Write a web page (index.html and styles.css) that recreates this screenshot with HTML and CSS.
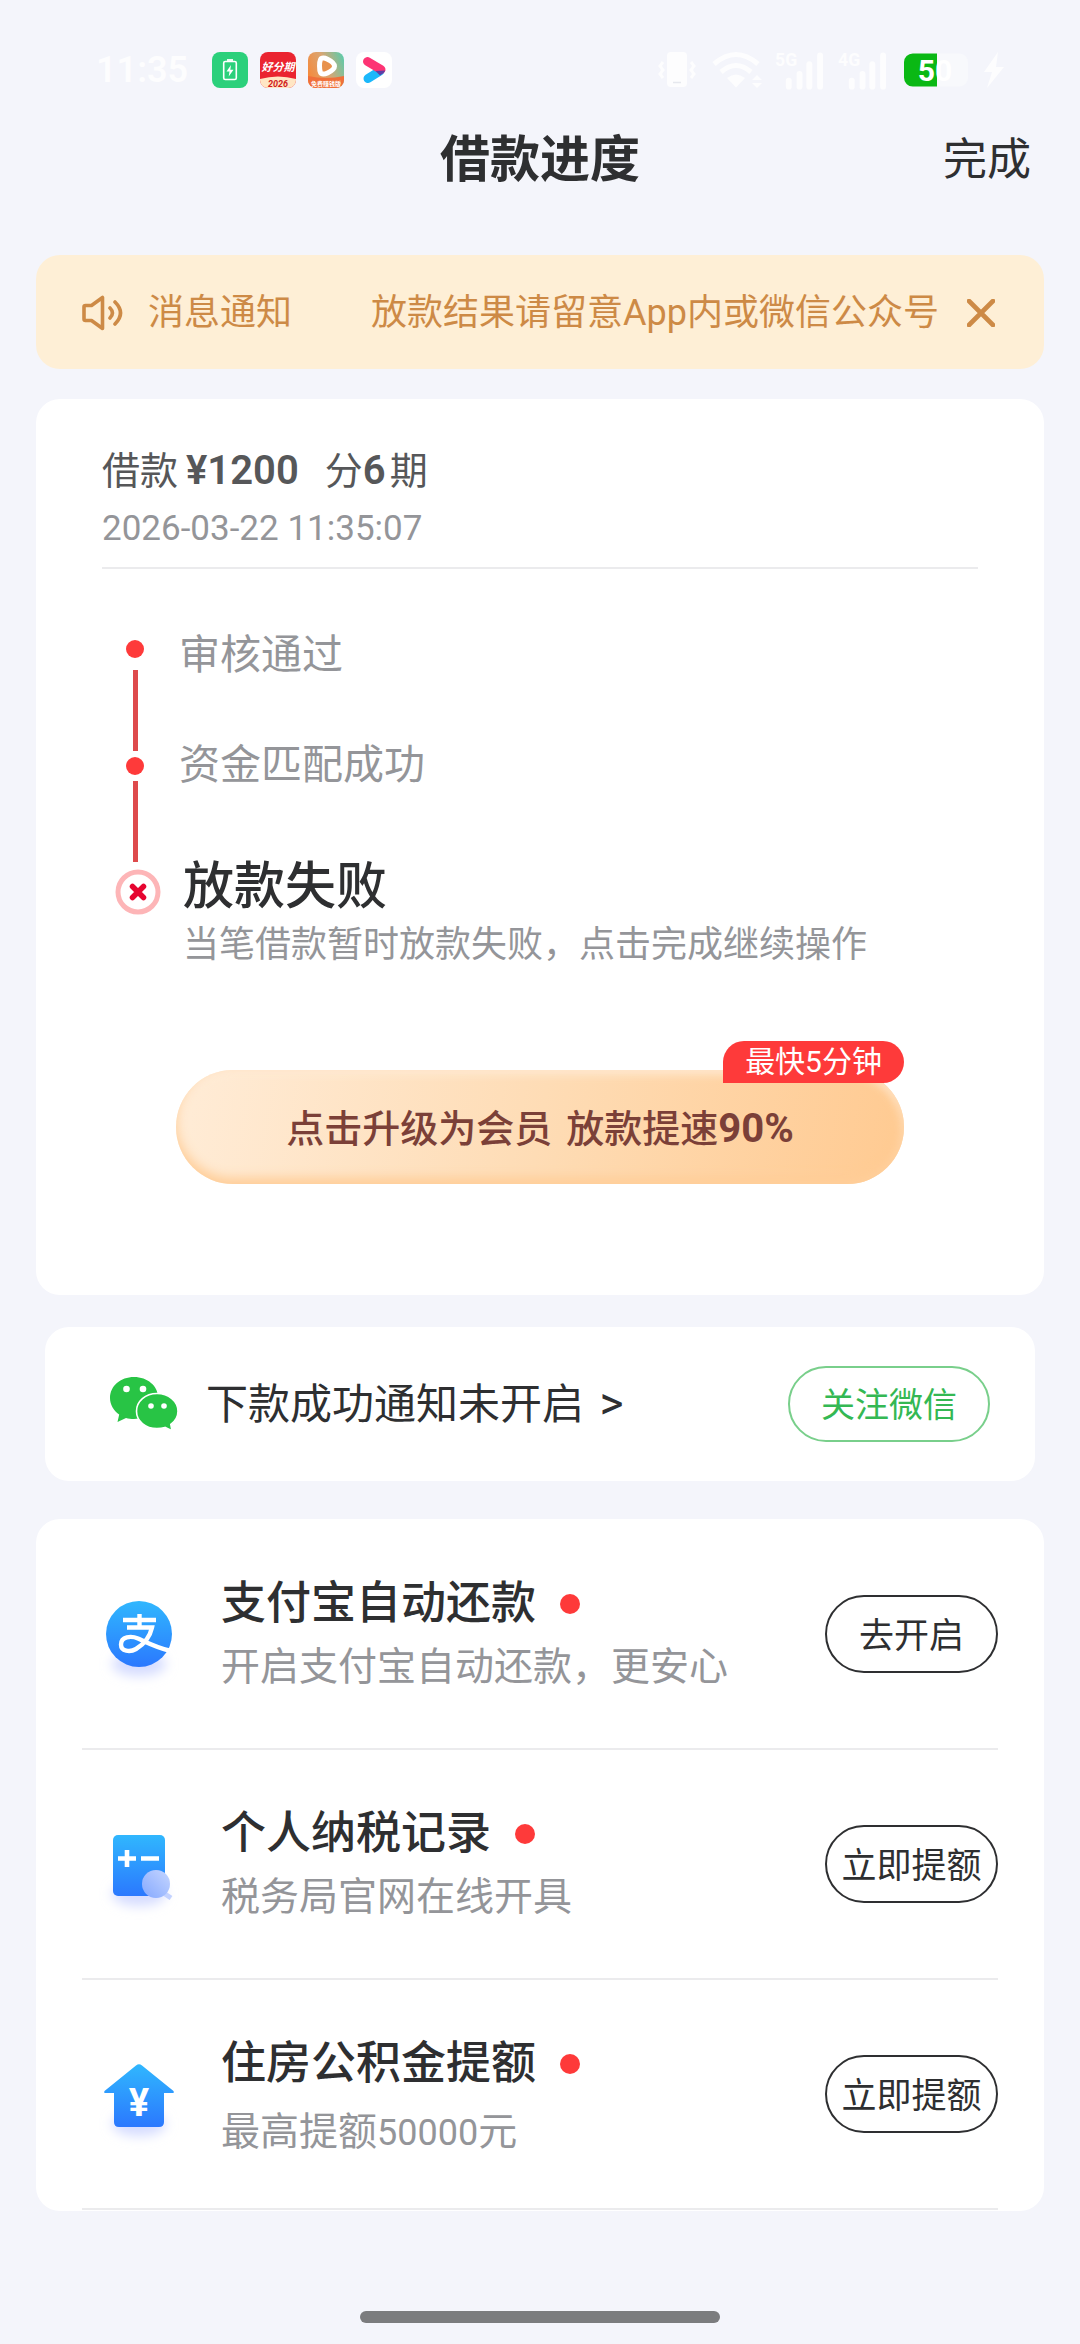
FILE: index.html
```html
<!DOCTYPE html>
<html lang="zh-CN">
<head>
<meta charset="UTF-8">
<meta name="viewport" content="width=device-width, initial-scale=1">
<title>借款进度</title>
<link rel="stylesheet" href="styles.css">
</head>
<body>
<div class="status-bar">
  <span class="clock">11:35</span>
  <div class="status-apps">
    <svg class="app" viewBox="0 0 36 36" aria-hidden="true">
      <rect width="36" height="36" rx="8" fill="#2bd07b"/>
      <rect x="11.700" y="9.500" width="12.600" height="18" rx="1.500" fill="none" stroke="#fff" stroke-width="1.600"/>
      <path d="M15 8h6" stroke="#fff" stroke-width="1.800"/>
      <path d="M19 13l-4.500 6.500h3l-.8 5 4.800-6.800h-3.200z" fill="#fff"/>
    </svg>
    <svg class="app" viewBox="0 0 36 36" aria-hidden="true">
      <defs>
        <clipPath id="tile"><rect width="36" height="36" rx="8"/></clipPath>
      </defs>
      <g clip-path="url(#tile)">
        <rect width="36" height="36" fill="#ea2430"/>
        <path d="M0 27q18-5 36 0v9H0z" fill="#ffe6c4"/>
        <text x="18" y="19" text-anchor="middle" class="app-name">好分期</text>
        <text x="18" y="35" text-anchor="middle" class="app-year">2026</text>
      </g>
    </svg>
    <svg class="app" viewBox="0 0 36 36" aria-hidden="true">
      <defs>
        <linearGradient id="play" x1="0" y1=".6" x2="1" y2=".2">
          <stop offset="0" stop-color="#f58a3c"/><stop offset=".5" stop-color="#d9a673"/><stop offset="1" stop-color="#62c9a8"/>
        </linearGradient>
      </defs>
      <g clip-path="url(#tile)">
        <rect width="36" height="36" fill="url(#play)"/>
        <path d="M0 24q18 4 36 0v12H0z" fill="#f0703a"/>
        <path d="M12.500 7.500c1-2 4-1.800 7-.3 3.500 1.700 7 4.500 7 7s-3.500 5-7 6.700c-3 1.500-6 1.800-7-.2-1.300-2.700-1.300-10.500 0-13.200z" fill="#e8924c" stroke="#fff" stroke-width="5"/>
        <text x="18" y="34" text-anchor="middle" class="app-tag">免费赚钱版</text>
      </g>
    </svg>
    <svg class="app" viewBox="0 0 36 36" aria-hidden="true">
      <rect width="36" height="36" rx="8" fill="#fff"/>
      <path d="M12 26.500L24 19" stroke="#1bb8fb" stroke-width="9" stroke-linecap="round"/>
      <path d="M11.500 9.500L25 17.500" stroke="#fd3474" stroke-width="9" stroke-linecap="round"/>
      <path d="M19.500 19l9.800-.6q-1 2.500-5.300 5z" fill="#5b3fa8"/>
    </svg>
  </div>
  <div class="status-system">
    <svg class="sys-vibrate" viewBox="0 0 38 36" aria-hidden="true">
      <rect x="9" width="20" height="35" rx="4" fill="#fdfdfe"/>
      <path d="M15 30.500h8" stroke="#e6e8ee" stroke-width="1.500"/>
      <path d="M5 10l-3 4 3 4-3 4 3 4M33 10l3 4-3 4 3 4-3 4" fill="none" stroke="#fdfdfe" stroke-width="3"/>
    </svg>
    <svg class="sys-wifi" viewBox="0 0 50 36" aria-hidden="true">
      <path d="M2 12q22-19 44 0M9 20q15-13 30 0" fill="none" stroke="#fdfdfe" stroke-width="5"/>
      <path d="M15 26q9-7 18 0l-9 9.500z" fill="#fdfdfe"/>
      <path d="M40 28l5-5 5 5zM40 31l5 5 5-5z" fill="#fdfdfe"/>
    </svg>
    <svg class="sys-signal" viewBox="0 0 48 36" aria-hidden="true">
      <text x="-3" y="14" class="net">5G</text>
      <path d="M11 29v6M22 22v13M32 12v23M43 3v32" stroke="#fdfdfe" stroke-width="6" stroke-linecap="round"/>
    </svg>
    <svg class="sys-signal" viewBox="0 0 48 36" aria-hidden="true">
      <text x="-3" y="14" class="net">4G</text>
      <path d="M11 29v6M22 22v13M32 12v23M43 3v32" stroke="#fdfdfe" stroke-width="6" stroke-linecap="round"/>
    </svg>
    <svg class="sys-battery" viewBox="0 0 66 34" aria-hidden="true">
      <rect width="66" height="34" rx="9" fill="#f8f9fc"/>
      <path d="M34 0H9a9 9 0 0 0-9 9v16a9 9 0 0 0 9 9h25z" fill="#0ab814"/>
      <text x="32" y="28" text-anchor="middle" class="level">50</text>
    </svg>
    <svg class="sys-bolt" viewBox="0 0 20 36" aria-hidden="true">
      <path d="M14 0L0 20h8L3 36l17-21h-8z" fill="#fdfdfe"/>
    </svg>
  </div>
</div>

<header class="nav">
  <h1 class="nav-title">借款进度</h1>
  <button class="nav-done" type="button">完成</button>
</header>

<main class="page">
  <section class="notice">
    <svg class="notice-icon" viewBox="0 0 42 36" aria-hidden="true">
      <path d="M3.500 10.500h6L20.500 2.500v31l-11-8h-6q-1.500 0-1.500-1.500V12q0-1.500 1.500-1.500z" fill="none" stroke="#cd8a46" stroke-width="3.600" stroke-linejoin="round"/>
      <path d="M28 13q5 5 0 10M33 7q11 11 0 22" fill="none" stroke="#cd8a46" stroke-width="3.600" stroke-linecap="round"/>
    </svg>
    <span class="notice-label">消息通知</span>
    <p class="notice-text">放款结果请留意App内或微信公众号</p>
    <button class="notice-close" type="button" aria-label="关闭">
      <svg viewBox="0 0 28 28" aria-hidden="true"><path d="M2 2l24 24M26 2L2 26" stroke="#cd8a46" stroke-width="4.600" stroke-linecap="round"/></svg>
    </button>
  </section>

  <section class="card loan">
    <div class="loan-head">
      <p class="loan-sum"><span>借款</span><b class="loan-amount">¥1200</b><span class="loan-term">分<b>6</b></span><span class="loan-unit">期</span></p>
      <time class="loan-time">2026-03-22 11:35:07</time>
    </div>
    <div class="timeline">
      <div class="rail" aria-hidden="true">
        <i class="rail-dot"></i>
        <i class="rail-line"></i>
        <i class="rail-dot rail-dot-next"></i>
        <i class="rail-line rail-line-next"></i>
        <svg class="rail-fail" viewBox="0 0 46 46">
          <circle cx="23" cy="23" r="20" fill="#fff" stroke="#fdb5b7" stroke-width="5"/>
          <path d="M17.500 17.500l11 11M28.500 17.500l-11 11" stroke="#e60530" stroke-width="5.500" stroke-linecap="round"/>
        </svg>
      </div>
      <ol class="steps">
        <li class="step">审核通过</li>
        <li class="step">资金匹配成功</li>
        <li class="step-fail">
          <h2 class="fail-title">放款失败</h2>
          <p class="fail-text">当笔借款暂时放款失败，点击完成继续操作</p>
        </li>
      </ol>
    </div>
    <button class="upgrade" type="button">
      <span class="upgrade-text"><span>点击升级为会员</span> <span>放款提速<b>90%</b></span></span>
      <span class="upgrade-badge">最快5分钟</span>
    </button>
  </section>

  <section class="card wechat">
    <svg class="wechat-icon" viewBox="0 0 68 54" aria-hidden="true">
      <path d="M24 0c13.500 0 24 9 24 20S37.500 42 24 42c-3 0-5.500-.4-8-1.100L7.500 45l1.700-7.500C3.500 33.800 0 27.500 0 21 0 9 10.500 0 24 0z" fill="#28c445"/>
      <path d="M47 16.500c11.600 0 21 7.700 21 17.700 0 5.500-2.800 10-7.200 13.200l1.200 6.400-7-3.400c-2.500.8-5 1.200-8 1.200-11.600 0-20.500-7.700-20.500-17.400S35.400 16.500 47 16.500z" fill="#28c445" stroke="#fff" stroke-width="1.600"/>
      <circle cx="16.500" cy="12" r="3.300" fill="#fff"/><circle cx="33" cy="12" r="3.300" fill="#fff"/>
      <circle cx="41" cy="29" r="2.800" fill="#fff"/><circle cx="54" cy="29" r="2.800" fill="#fff"/>
    </svg>
    <a class="wechat-link" href="#wechat">下款成功通知未开启 <span class="wechat-more">&gt;</span></a>
    <button class="pill pill-green" type="button">关注微信</button>
  </section>

  <ul class="card offers">
    <li class="offer">
      <svg class="offer-icon" viewBox="0 0 70 84" aria-hidden="true">
        <defs>
          <linearGradient id="blue" x1="0" y1="0" x2="0" y2="1"><stop offset="0" stop-color="#30b7fe"/><stop offset="1" stop-color="#2b78fe"/></linearGradient>
          <filter id="glow" x="-50%" y="-100%" width="200%" height="300%"><feGaussianBlur stdDeviation="6"/></filter>
        </defs>
        <ellipse cx="35" cy="72" rx="27" ry="12" fill="#d5dcff" filter="url(#glow)"/>
        <circle cx="35" cy="42" r="33" fill="url(#blue)"/>
        <path d="M19 28h33M35.500 22v13M23 35.500h25c-2 9-8.500 17-16 21.500-6 3.500-15 2.500-15-4.500 0-8 10-9 17-6 9 4 17 8.500 31 12" fill="none" stroke="#fff" stroke-width="4.400"/>
      </svg>
      <div class="offer-body">
        <h3 class="offer-title">支付宝自动还款</h3>
        <p class="offer-text">开启支付宝自动还款，更安心</p>
      </div>
      <button class="pill" type="button">去开启</button>
    </li>
    <li class="offer">
      <svg class="offer-icon" viewBox="0 0 70 84" aria-hidden="true">
        <defs><linearGradient id="lens" x1="0" y1="1" x2="1" y2="0"><stop offset="0" stop-color="#84a8ff"/><stop offset="1" stop-color="#c6d6ff"/></linearGradient></defs>
        <ellipse cx="35" cy="72" rx="27" ry="12" fill="#d5dcff" filter="url(#glow)"/>
        <rect x="9" y="13" width="52" height="61" rx="5" fill="url(#blue)"/>
        <path d="M14 36.500h18M23 28v17M37 36.500h18" stroke="#fff" stroke-width="4.600"/>
        <path d="M61 72l6 4" stroke="#c3d2ff" stroke-width="5"/>
        <circle cx="52" cy="62" r="14" fill="url(#lens)"/>
      </svg>
      <div class="offer-body">
        <h3 class="offer-title">个人纳税记录</h3>
        <p class="offer-text">税务局官网在线开具</p>
      </div>
      <button class="pill" type="button">立即提额</button>
    </li>
    <li class="offer">
      <svg class="offer-icon" viewBox="0 0 70 84" aria-hidden="true">
        <ellipse cx="35" cy="72" rx="27" ry="12" fill="#d5dcff" filter="url(#glow)"/>
        <path d="M32 13.500q3-2.500 6 0L69.500 39q1 2-1 2H60v29q0 5-5 5H15q-5 0-5-5V41H1.500q-2 0-1-2z" fill="url(#blue)"/>
        <text x="35" y="64" text-anchor="middle" class="yuan">¥</text>
      </svg>
      <div class="offer-body">
        <h3 class="offer-title">住房公积金提额</h3>
        <p class="offer-text offer-text-low">最高提额<span class="offer-number">50000</span>元</p>
      </div>
      <button class="pill" type="button">立即提额</button>
    </li>
  </ul>
</main>
<div class="home-indicator"></div>
</body>
</html>
```
FILE: styles.css
```css
* { box-sizing: border-box; }

body {
  margin: 0;
  min-height: 100vh;
  display: flex;
  flex-direction: column;
  background: #f4f5fb;
  color: #2e2f31;
  font-family: Roboto, "Noto Sans CJK SC", sans-serif;
}

h1, h2, h3, p, ol, ul { margin: 0; padding: 0; font-weight: 400; }
ol, ul { list-style: none; }
svg { display: block; }
button {
  padding: 0;
  border: 0;
  background: none;
  color: inherit;
  font: inherit;
  cursor: pointer;
}

/* Status bar */
.status-bar {
  display: flex;
  align-items: center;
  height: 130px;
  padding: 10px 76px 0 96px;
}
.clock { width: 116px; color: #fdfdfe; font-size: 36px; font-weight: 600; }
.status-apps { display: flex; gap: 12px; flex: 1; }
.app { width: 36px; height: 36px; }
.app-name { fill: #fff; font-size: 11px; font-weight: 700; font-style: italic; }
.app-year { fill: #d01c22; font-size: 9px; font-weight: 700; font-style: italic; }
.app-tag { fill: #fff; font-size: 6px; font-weight: 700; }
.status-system { display: flex; align-items: center; gap: 16px; }
.sys-vibrate { width: 38px; height: 36px; }
.sys-wifi { width: 50px; height: 36px; overflow: visible; }
.sys-signal { width: 47px; height: 36px; overflow: visible; }
.sys-battery { width: 64px; height: 34px; }
.sys-bolt { width: 20px; height: 36px; }
.net { fill: #fdfdfe; font-size: 18px; font-weight: 700; }
.level { fill: #fff; font-size: 31px; font-weight: 700; }

/* Title row */
.nav {
  display: grid;
  grid-template-columns: 1fr auto 1fr;
  align-items: center;
  height: 60px;
  padding: 0 49px;
}
.nav-title { grid-column: 2; font-size: 50px; line-height: 60px; font-weight: 700; }
.nav-done { justify-self: end; font-size: 44px; line-height: 60px; }

.page {
  display: flex;
  flex-direction: column;
  padding: 65px 36px 0;
}

/* Notice */
.notice {
  display: flex;
  align-items: center;
  height: 114px;
  margin-bottom: 30px;
  padding: 2px 49px 0 46px;
  border-radius: 24px;
  background: #feefd6;
  color: #cd8a46;
  font-size: 36px;
  line-height: 48px;
}
.notice-icon { width: 42px; height: 36px; margin-right: 24px; }
.notice-text { flex: 1; margin-right: 28px; text-align: right; }
.notice-close svg { width: 28px; height: 28px; }

.card { border-radius: 24px; background: #fff; }

/* Loan progress */
.loan { padding: 46px 66px 111px; }
.loan-head {
  display: flex;
  flex-direction: column;
  gap: 8px;
  padding-bottom: 14px;
  border-bottom: 2px solid #ebebed;
}
.loan-sum {
  display: flex;
  align-items: baseline;
  color: #565759;
  font-size: 38px;
  line-height: 52px;
}
.loan-sum b { font-size: 40px; font-weight: 600; }
.loan-amount { margin: 0 26px 0 8px; }
.loan-unit { margin-left: 4px; }
.loan-time { color: #949599; font-size: 35px; line-height: 48px; }

.timeline { display: flex; gap: 18px; padding: 60px 0 0 13px; }
.rail { width: 46px; padding-top: 11px; }
.rail-dot, .rail-line { display: block; }
.rail-dot {
  width: 18px;
  height: 18px;
  margin-left: 11px;
  border-radius: 50%;
  background: #fe3a3a;
}
.rail-line { width: 5px; height: 81px; margin: 12px 0 0 18px; background: #de4a4c; }
.rail-dot-next { margin-top: 6px; }
.rail-line-next { margin-top: 6px; }
.rail-fail { width: 46px; height: 46px; margin-top: 7px; }
.steps { flex: 1; padding-top: 2px; }
.step {
  margin-bottom: 62px;
  color: #949599;
  font-size: 41px;
  line-height: 48px;
}
.step-fail { padding: 6px 0 0 4px; }
.fail-title { font-size: 51px; line-height: 60px; font-weight: 500; }
.fail-text { margin-top: 4px; color: #949599; font-size: 36px; line-height: 48px; }

.upgrade {
  position: relative;
  display: block;
  width: calc(100% - 148px);
  height: 114px;
  margin: 101px 74px 0;
  padding-bottom: 4px;
  border-radius: 57px;
  background: linear-gradient(100deg, #ffecd7, #fedcb5 50%, #ffca91);
  box-shadow: inset 0 -6px 12px #ffcd97, inset 0 4px 10px #ffecd8;
  color: #7b4038;
  font-size: 38px;
  font-weight: 500;
}
.upgrade-text { display: flex; justify-content: center; align-items: baseline; gap: 14px; }
.upgrade b { font-size: 40px; font-weight: 700; }
.upgrade-badge {
  position: absolute;
  top: -29px;
  right: 0;
  padding: 0 22px;
  border-radius: 21px 21px 21px 0;
  background: #fe3a3a;
  color: #fff;
  font-size: 30px;
  line-height: 42px;
  font-weight: 400;
}

/* WeChat */
.wechat {
  display: flex;
  align-items: center;
  height: 154px;
  margin: 32px 9px 38px;
  padding: 0 45px 0 65px;
}
.wechat-icon { width: 68px; height: 54px; margin-right: 28px; }
.wechat-link {
  flex: 1;
  color: inherit;
  font-size: 42px;
  line-height: 60px;
  text-decoration: none;
}
.wechat-more { margin-left: 5px; font-size: 46px; }

.pill {
  min-width: 173px;
  height: 78px;
  padding-bottom: 4px;
  border: 2px solid #2e2f31;
  border-radius: 39px;
  font-size: 35px;
}
.pill-green {
  min-width: 202px;
  height: 76px;
  border-color: #79cf8b;
  color: #34b853;
  font-size: 34px;
}

/* Offers */
.offers { padding: 1px 46px; }
.offer {
  display: flex;
  align-items: center;
  height: 230px;
  border-bottom: 2px solid #ebebed;
}
.offer-icon { width: 70px; height: 84px; margin: 0 47px 0 22px; overflow: visible; }
.offer-body { flex: 1; align-self: flex-start; padding-top: 54px; }
.offer-title {
  display: flex;
  align-items: center;
  gap: 24px;
  font-size: 45px;
  line-height: 60px;
  font-weight: 500;
}
.offer-title::after {
  content: "";
  width: 20px;
  height: 20px;
  border-radius: 50%;
  background: #fe3a3a;
}
.offer-text { margin-top: 3px; color: #949599; font-size: 39px; line-height: 60px; }
.offer-text-low { margin-top: 8px; }
.offer-number { font-size: 36px; }
.yuan { fill: #fff; font-size: 38px; font-weight: 700; }

.home-indicator {
  width: 33.333%;
  height: 12px;
  margin: auto auto 21px;
  border-radius: 6px;
  background: #7b7c7e;
}
```
